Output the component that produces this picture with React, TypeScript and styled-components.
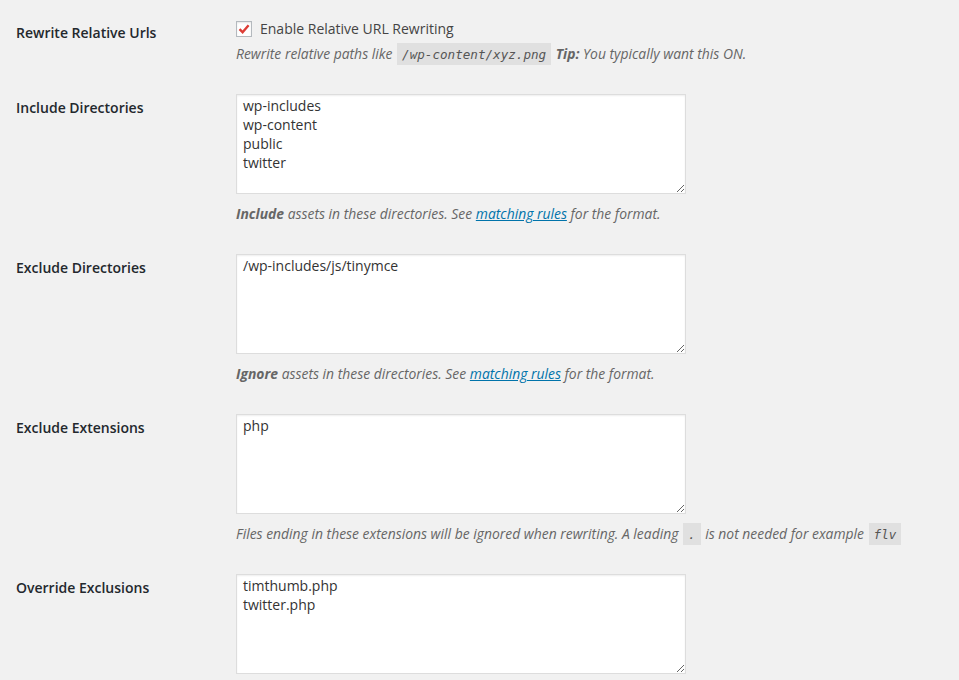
import React from "react";
import styled, { createGlobalStyle } from "styled-components";

const Global = createGlobalStyle`
  html, body { margin: 0; padding: 0; background: #f1f1f1; }
  body { font-family: "Open Sans", "Liberation Sans", sans-serif; color: #444; font-size: 13px; }
`;

const Page = styled.div`
  padding: 4px 0 0 16px;
  width: 943px;
  overflow: hidden;
`;

const Row = styled.div`
  display: grid;
  grid-template-columns: 210px 1fr;
`;

const Label = styled.div`
  padding: 20px 10px 20px 0;
  font-size: 14px;
  font-weight: 600;
  line-height: 18px;
  color: #23282d;
`;

const Field = styled.div`
  padding: 15px 10px;
  display: flex;
  flex-direction: column;
  align-items: flex-start;
`;

const CheckLine = styled.label`
  display: flex;
  align-items: center;
  gap: 8px;
  font-size: 14px;
  line-height: 20px;
  color: #444;
  height: 20px;
`;

const Box = styled.span`
  width: 16px;
  height: 16px;
  box-sizing: border-box;
  border: 1px solid #b4b9be;
  background: #fff;
  box-shadow: inset 0 1px 2px rgba(0, 0, 0, 0.1);
  display: flex;
  align-items: center;
  justify-content: center;
`;

const Description = styled.p<{ $mt?: number }>`
  margin: ${(p) => p.$mt ?? 9}px 0 0;
  font-size: 13.9px;
  font-style: italic;
  line-height: 21px;
  height: 21px;
  color: #666;
  white-space: nowrap;
`;

const Code = styled.code`
  font-family: "DejaVu Sans Mono", "Liberation Mono", monospace;
  font-size: 12.6px;
  line-height: 1;
  font-style: italic;
  background: rgba(0, 0, 0, 0.07);
  padding: 4px 5px 3px;
  margin: 0 1px;
  color: #555;
`;

const Text = styled.textarea`
  box-sizing: border-box;
  display: block;
  width: 450px;
  height: 100px;
  border: 1px solid #ddd;
  background: #fff;
  box-shadow: inset 0 1px 2px rgba(0, 0, 0, 0.07);
  font-family: "Open Sans", "Liberation Sans", sans-serif;
  font-size: 14px;
  line-height: 19px;
  color: #333;
  padding: 1px 6px;
  margin: 0;
  outline: none;
  resize: both;
`;

const Link = styled.a`
  color: #0073aa;
  text-decoration: underline;
`;

const rows = [
  {
    label: "Include Directories",
    value: "wp-includes\nwp-content\npublic\ntwitter",
    desc: (
      <>
        <b>Include</b> assets in these directories. See <Link href="#">matching rules</Link> for the format.
      </>
    ),
  },
  {
    label: "Exclude Directories",
    value: "/wp-includes/js/tinymce",
    desc: (
      <>
        <b>Ignore</b> assets in these directories. See <Link href="#">matching rules</Link> for the format.
      </>
    ),
  },
  {
    label: "Exclude Extensions",
    value: "php",
    desc: (
      <>
        Files ending in these extensions will be ignored when rewriting. A leading <Code>.</Code> is not needed for
        example <Code>flv</Code>
      </>
    ),
  },
  {
    label: "Override Exclusions",
    value: "timthumb.php\ntwitter.php",
    desc: null,
  },
];

export default function App() {
  return (
    <Page>
      <Global />
      <Row>
        <Label>Rewrite Relative Urls</Label>
        <Field>
          <CheckLine>
            <Box>
              <svg width="14" height="14" viewBox="0 0 14 14">
                <path d="M2.5 7.2 L5.6 10.2 L11.6 3.2" fill="none" stroke="#dd3d36" strokeWidth="2.4" />
              </svg>
            </Box>
            Enable Relative URL Rewriting
          </CheckLine>
          <Description $mt={4}>
            Rewrite relative paths like <Code>/wp-content/xyz.png</Code> <b>Tip:</b> You typically want this ON.
          </Description>
        </Field>
      </Row>
      {rows.map((r) => (
        <Row key={r.label}>
          <Label>{r.label}</Label>
          <Field>
            <Text defaultValue={r.value} spellCheck={false} />
            {r.desc && <Description>{r.desc}</Description>}
          </Field>
        </Row>
      ))}
    </Page>
  );
}
